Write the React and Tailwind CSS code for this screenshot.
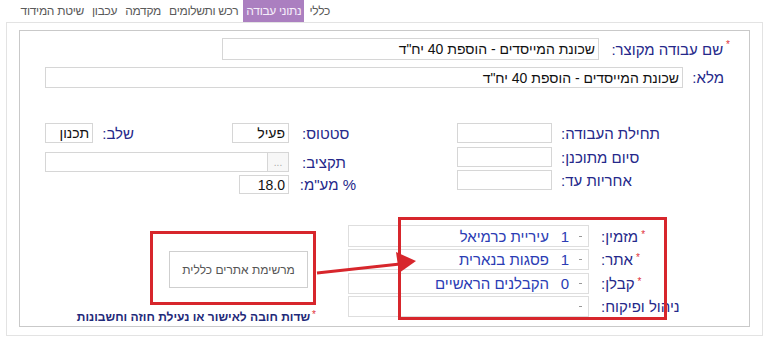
import React from "react";

const lbl = "text-[15px] text-[#25288a] leading-none whitespace-nowrap";
const inp = "border border-[#d6d6d6] bg-white text-[14px] text-[#111] leading-none flex items-center px-[3px] whitespace-nowrap";

function Star() {
  return <span className="text-[#e0313a] text-[10px] relative top-[-4px] ml-[3px]">*</span>;
}

function Select({ num, name }) {
  return (
    <div className="w-[241px] h-full mr-[12px] border border-[#dedede] bg-white flex items-center text-[15px] text-[#2b3cb4] leading-none whitespace-nowrap">
      <div className="w-[19px] shrink-0 flex justify-center items-center">
        <span className="block w-[3px] h-[1px] bg-[#999] ml-[4px]"></span>
      </div>
      {num !== undefined && (
        <>
          <span className="w-[8px] shrink-0">{num}</span>
          <span className="mr-[12px]">{name}</span>
        </>
      )}
    </div>
  );
}

export default function App() {
  return (
    <div dir="rtl" className="relative w-[768px] h-[344px] bg-white overflow-hidden font-['Liberation_Sans',Arial,sans-serif]">
      {/* tabs */}
      <div className="flex h-[22px] pr-[435px] gap-[2px] text-[12px] tracking-[-0.3px] text-[#5a5a5a] leading-[22px] whitespace-nowrap">
        <div className="px-[3px] shrink-0">כללי</div>
        <div className="px-[3px] shrink-0 bg-[#ab7fc0] text-[#f6eefa]">נתוני עבודה</div>
        <div className="px-[3px] shrink-0">רכש ותשלומים</div>
        <div className="px-[3px] shrink-0">מקדמה</div>
        <div className="px-[3px] shrink-0">עכבון</div>
        <div className="px-[3px] shrink-0">שיטת המידוד</div>
      </div>

      {/* outer panel */}
      <div className="ml-[6px] mr-[5px] h-[314px] border border-[#e3e3e3]">
        <div className="mx-[12px] mt-[7px] h-[297px] border border-[#c9c9c9]">
          {/* row 1 */}
          <div className="mt-[7px] flex items-center h-[22px] pr-[19px]">
            <div className={`w-[131px] flex items-center ${lbl}`}>
              <Star />
              <span>שם עבודה מקוצר:</span>
            </div>
            <div className={`w-[377px] h-[22px] bg-[#f6f6f6] ${inp}`}>שכונת המייסדים - הוספת 40 יח"ד</div>
          </div>
          {/* row 2 */}
          <div className="mt-[7px] flex items-center h-[21px] pr-[25px]">
            <div className={`w-[41px] ${lbl}`}>מלא:</div>
            <div className={`w-[638px] h-[21px] bg-[#f6f6f6] ${inp}`}>שכונת המייסדים - הוספת 40 יח"ד</div>
          </div>

          {/* group */}
          <div className="mt-[35px] flex pr-[86px]">
            <div className="flex flex-col">
              <div className="flex items-center h-[20px]">
                <div className={`w-[102px] text-left ${lbl}`}>תחילת העבודה:</div>
                <div className={`w-[95px] h-[20px] mr-[9px] ${inp}`}></div>
              </div>
              <div className="flex items-center h-[20px] mt-[4px]">
                <div className={`w-[102px] text-left ${lbl}`}>סיום מתוכנן:</div>
                <div className={`w-[95px] h-[20px] mr-[9px] ${inp}`}></div>
              </div>
              <div className="flex items-center h-[20px] mt-[3px]">
                <div className={`w-[102px] text-left ${lbl}`}>אחריות עד:</div>
                <div className={`w-[95px] h-[20px] mr-[9px] ${inp}`}></div>
              </div>
            </div>
            <div className="flex flex-col mr-[101px]">
              <div className="flex items-center h-[20px]">
                <div className={`w-[54px] text-left ${lbl}`}>סטטוס:</div>
                <div className={`w-[57px] h-[20px] mr-[13px] ${inp}`}>פעיל</div>
                <div className={`mr-[98px] ${lbl}`}>שלב:</div>
                <div className={`w-[48px] h-[20px] mr-[9px] ${inp}`}>תכנון</div>
              </div>
              <div className="flex items-center h-[20px] mt-[9px]">
                <div className={`w-[54px] text-left ${lbl}`}>תקציב:</div>
                <div className="w-[244px] h-[20px] mr-[13px] flex">
                  <div className="w-[22px] h-full border border-[#d6d6d6] bg-[#f7f7f7] text-[10px] text-[#aaa] flex items-end justify-center pb-[3px] leading-none">...</div>
                  <div className="flex-1 h-full border border-[#d6d6d6] border-r-0 bg-white"></div>
                </div>
              </div>
              <div className="flex items-center h-[19px] mt-[3px]">
                <div className={`w-[54px] text-left ${lbl}`}>% מע"מ:</div>
                <div className={`w-[50px] h-[19px] mr-[13px] ${inp}`}>18.0</div>
              </div>
            </div>
          </div>

          {/* bottom */}
          <div className="mt-[31px] flex pr-[67px]">
            <div className="flex flex-col">
              <div className="flex items-center h-[22px]">
                <div className={`w-[81px] text-left ${lbl}`}><Star />מזמין:</div>
                <Select num="1" name="עיריית כרמיאל" />
              </div>
              <div className="flex items-center h-[21px] mt-[2px]">
                <div className={`w-[81px] text-left ${lbl}`}><Star />אתר:</div>
                <Select num="1" name="פסגות בנארית" />
              </div>
              <div className="flex items-center h-[21px] mt-[3px]">
                <div className={`w-[81px] text-left ${lbl}`}><Star />קבלן:</div>
                <Select num="0" name="הקבלנים הראשיים" />
              </div>
              <div className="flex items-center h-[21px] mt-[2px]">
                <div className={`w-[81px] text-left ${lbl}`}>ניהול ופיקוח:</div>
                <Select />
              </div>
            </div>
            <div className="flex flex-col mr-[32px]">
              <div className="mt-[26px] mr-[8px] w-[139px] h-[37px] border border-[#cfcfcf] bg-white flex items-center justify-center text-[12px] text-[#555]">
                מרשימת אתרים כללית
              </div>
              <div className="mt-[22px] text-[12px] font-bold text-[#1f2a7a] leading-[14px] whitespace-nowrap">
                <span className="text-[#e0313a] font-normal text-[10px] relative top-[-3px] ml-[2px]">*</span>
                שדות חובה לאישור או נעילת חוזה וחשבונות
              </div>
            </div>
          </div>
        </div>
      </div>

      {/* annotations */}
      <div className="absolute left-[398px] top-[217px] w-[269px] h-[103px] border-[3px] border-[#d7262c] pointer-events-none"></div>
      <div className="absolute left-[150px] top-[231px] w-[166px] h-[74px] border-[3px] border-[#d7262c] pointer-events-none"></div>
      <svg className="absolute left-0 top-0 pointer-events-none" width="768" height="344" viewBox="0 0 768 344">
        <line x1="317" y1="273" x2="400" y2="264" stroke="#d7262c" strokeWidth="3" />
        <polygon points="416,261 396,252 399,273" fill="#d7262c" />
      </svg>
    </div>
  );
}
